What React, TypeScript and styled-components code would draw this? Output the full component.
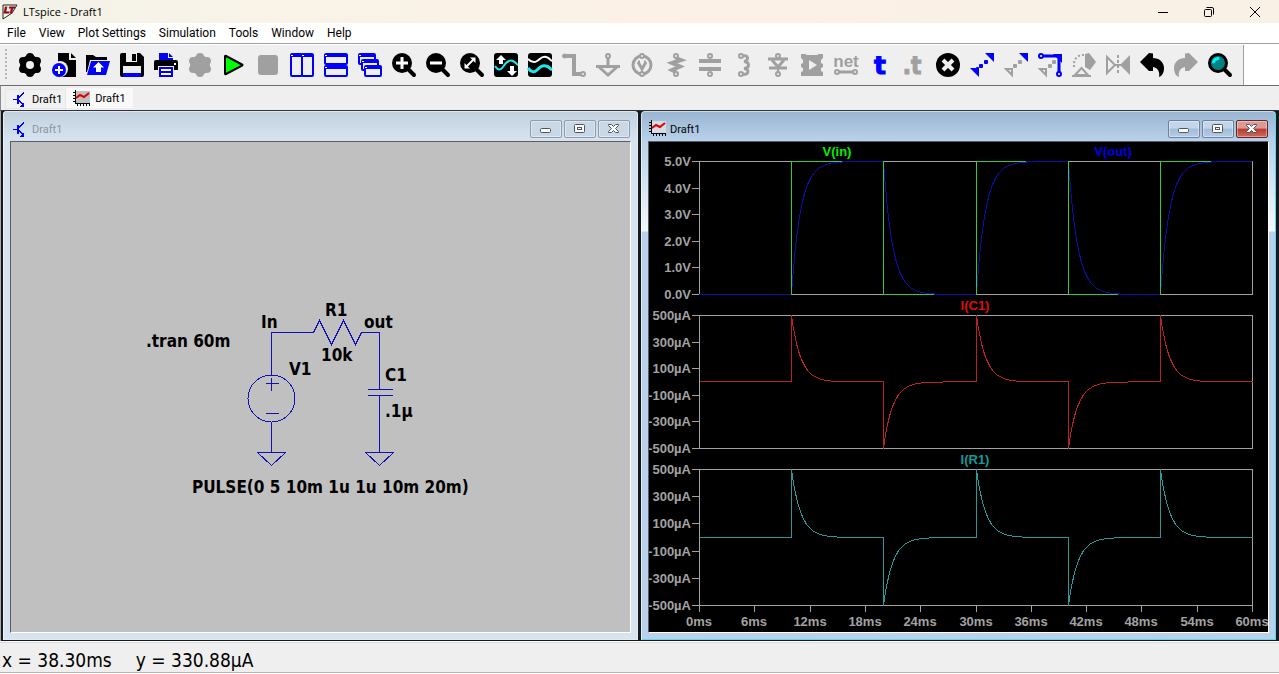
import React from "react";
import styled, { createGlobalStyle } from "styled-components";

const uiFont = `Roboto, "Open Sans", sans-serif`;
const GREY = "#a0a0a0";
const BLUE = "#0000ff";

const GlobalStyle = createGlobalStyle`
  * { box-sizing: border-box; }
  body { margin: 0; background: #efefef; font-family: ${uiFont}; font-size: 12px; color: #000; }
  button { font: inherit; color: inherit; padding: 0; margin: 0; border: 0; background: none; }
`;

const AppShell = styled.div`
  display: flex;
  flex-direction: column;
  min-height: 100vh;
`;

const TitleBar = styled.header`
  display: flex;
  align-items: center;
  height: 23px;
  padding: 0 1px 0 2px;
  background: linear-gradient(90deg, #f1f2e8 0%, #f8f3e8 15%, #fbf1e6 50%, #f9f0e6 100%);
`;

const AppTitle = styled.h1`
  flex: 1;
  margin: 0 0 0 5px;
  font-family: "Open Sans", sans-serif;
  font-size: 11px;
  font-weight: 400;
  line-height: 22px;
`;

const SystemButton = styled.button`
  display: grid;
  place-items: center;
  width: 46px;
  height: 22px;
`;

const MenuBar = styled.nav`
  display: flex;
  gap: 13px;
  height: 20px;
  padding-left: 7px;
  background: #fff;
`;

const MenuItem = styled.button`
  line-height: 20px;
  white-space: nowrap;
`;

const ToolRow = styled.div`
  display: flex;
  height: 42px;
  background: #fff;
  border-top: 1px solid #a0a0a0;
  padding-top: 1px;
  overflow: hidden;
`;

const ToolBar = styled.div`
  display: flex;
  align-items: center;
  padding: 0 6px 0 5px;
  background: #efefef;
  border-right: 1px solid #a0a0a0;
`;

const Grip = styled.span`
  width: 2px;
  height: 32px;
  margin-right: 6px;
  background: repeating-linear-gradient(180deg, #b8b8b8 0 2px, #efefef 2px 4px);
`;

const ToolButton = styled.button`
  display: grid;
  place-items: center;
  width: 34px;
  height: 40px;
`;

const ToolIcon = styled.svg`
  width: 24px;
  height: 24px;
  overflow: visible;
`;

const TabBar = styled.div`
  display: flex;
  align-items: flex-start;
  height: 26px;
  padding: 2px 0 0 4px;
  border-top: 1px solid #6c6c6c;
  border-bottom: 1px solid #303438;
  border-left: 1px solid #8c8c8c;
  background: #efefef;
`;

const Tab = styled.button<{ $active?: boolean }>`
  display: flex;
  align-items: center;
  gap: ${(p) => (p.$active ? 5 : 4)}px;
  height: 20px;
  margin-top: ${(p) => (p.$active ? 0 : 1)}px;
  padding: 0 ${(p) => (p.$active ? 6 : 3)}px 0 6px;
  font-size: 11px;
  background: ${(p) => (p.$active ? "#f9f9f9" : "#f1f1f1")};
  border: 1px solid ${(p) => (p.$active ? "#f9f9f9" : "#e6e6e6")};
`;

const Workspace = styled.main`
  flex: 1;
  display: grid;
  grid-template-columns: 1fr 1fr;
  gap: 3px;
  padding: 0 3px 1px 2px;
  border-left: 1px solid #ababab;
  background: #14191d;
`;

const ChildWindow = styled.section<{ $active?: boolean }>`
  display: flex;
  flex-direction: column;
  min-width: 0;
  padding: 0 7px 7px;
  border-radius: 4px 4px 0 0;
  background: ${(p) =>
    p.$active
      ? "linear-gradient(180deg, rgba(255,255,255,0) 0 30px, rgba(255,255,255,.85) 120px, rgba(255,255,255,0) 121px), linear-gradient(180deg, #9ab5d2 0, #b9d1ea 30px)"
      : "linear-gradient(180deg, #c2d0de 0, #d7e4f0 30px)"};
  box-shadow: inset 0 1px #ffffff80, inset 1px 0 #ffffff90, inset -1px -1px ${(p) => (p.$active ? "#5fd8ec" : "#dfeaf4")};
`;

const ChildTitle = styled.div<{ $active?: boolean }>`
  display: flex;
  align-items: center;
  height: 30px;
  padding: 5px 1px 0 ${(p) => (p.$active ? 1 : 2)}px;
  color: ${(p) => (p.$active ? "#000" : "#8e959d")};
`;

const ChildCaption = styled.h2`
  flex: 1;
  margin: 2px 0 0 4px;
  font-size: 11px;
  font-weight: 400;
`;

const CaptionButtons = styled.div`
  display: flex;
  gap: 2px;
`;

const CaptionButton = styled.button<{ $tone: "idle" | "active" | "close" }>`
  display: grid;
  place-items: center;
  width: 32px;
  height: 18px;
  border-radius: 2px;
  border: 1px solid ${(p) => (p.$tone === "idle" ? "#8c9db0" : p.$tone === "close" ? "#5c2a30" : "#6c829e")};
  box-shadow: inset 0 0 0 1px #ffffff60;
  background: ${(p) =>
    p.$tone === "idle"
      ? "#cad8e6"
      : p.$tone === "close"
        ? "linear-gradient(180deg, #dc9a92 0 45%, #b93a2c 50%, #cf6a5c 100%)"
        : "linear-gradient(180deg, #c2d5ea 0 45%, #a2bbd8 50%, #b4cce6 100%)"};
`;

const Client = styled.div<{ $dark?: boolean }>`
  flex: 1;
  display: flex;
  border: 1px solid;
  border-color: #5a5e64 #fff #fff #5a5e64;
  background: ${(p) => (p.$dark ? "#000" : "#c0c0c0")};
  overflow: hidden;
`;

const Canvas = styled.svg`
  display: block;
  flex: 1;
  min-width: 0;
  min-height: 300px;
`;

const SchematicText = styled.text`
  font: bold 17px "DejaVu Sans Condensed", "DejaVu Sans", sans-serif;
  fill: #000;
`;

const AxisText = styled.text<{ $color?: string }>`
  font: bold 13px "Liberation Sans", Arial, sans-serif;
  fill: ${(p) => p.$color ?? "#a2a2a2"};
`;

const StatusBar = styled.footer`
  display: flex;
  gap: 24px;
  height: 33px;
  padding: 1px 0 0 2px;
  border-top: 1px solid #fff;
  border-bottom: 1px solid #fff;
  box-shadow: inset 0 1px #dcdcdc, inset 0 -1px #b9b3b3;
  background: #efefef;
  font: 19px/34px "DejaVu Sans Condensed", "DejaVu Sans", sans-serif;
`;

/* ---------- toolbar drawings, all on a 24 x 24 grid ---------- */

const gearLobes = [30, 90, 150, 210, 270, 330].map((d) => {
  const a = (d * Math.PI) / 180;
  return <circle key={d} cx={12 + 8 * Math.cos(a)} cy={12 + 8 * Math.sin(a)} r="4" />;
});

const Magnifier = ({ children }: { children?: React.ReactNode }) => (
  <>
    <circle cx="10" cy="10" r="10" />
    <path d="M16 16L22 22" stroke="#000" strokeWidth="4" strokeLinecap="round" />
    {children}
  </>
);

const MiniWindow = ({ x, y, w, h }: { x: number; y: number; w: number; h: number }) => (
  <>
    <rect x={x + 1} y={y + 1} width={w - 2} height={h - 2} rx="1" fill="#efefef" stroke={BLUE} strokeWidth="2" />
    <rect x={x + 1} y={y + 1} width={w - 2} height="3" fill={BLUE} />
    <rect x={x + 1} y={y + 2} width="2" height="1" fill="#fff" />
  </>
);

const Terminal = ({ x, y }: { x: number; y: number }) => (
  <circle cx={x} cy={y} r="2" fill="#efefef" stroke={GREY} strokeWidth="2" />
);

const icons: [string, React.ReactNode][] = [
  ["Settings", <>{gearLobes}<circle cx="12" cy="12" r="10" /><circle cx="12" cy="12" r="4" fill="#efefef" /></>],
  ["New schematic", <>
    <path d="M6 0H17V7H24V24H6Z" /><path d="M19 0L24 5H19Z" />
    <circle cx="8" cy="16" r="8" fill="#efefef" /><circle cx="7" cy="17" r="7" fill={BLUE} />
    <path d="M7 13V21M3 17H11" stroke="#fff" strokeWidth="2" />
  </>],
  ["Open", <>
    <path d="M0 2H7L10 4H21V7H4L1 19H0Z" />
    <path d="M5 8H24L20 22H1Z" fill={BLUE} />
    <path d="M12.500 9L18 14.500H15V19H10V14.500H7Z" fill="#fff" />
  </>],
  ["Save", <>
    <path d="M2 0H20L24 4V22Q24 24 22 24H2Q0 24 0 22V2Q0 0 2 0Z" />
    <rect x="6" y="0" width="11" height="9" fill="#efefef" /><rect x="12" y="1" width="4" height="7" />
    <rect x="3" y="13" width="18" height="7" fill="#efefef" /><rect x="3" y="20" width="18" height="4" fill={BLUE} />
  </>],
  ["Print", <>
    <path d="M5 0H14V5H19V8H5Z" fill={BLUE} /><path d="M15 0L19 4H15Z" fill={BLUE} />
    <path d="M2 7H22Q24 7 24 9V17H0V9Q0 7 2 7Z" /><rect x="20" y="10" width="2" height="2" fill="#fff" />
    <rect x="4" y="13" width="16" height="11" fill="#efefef" /><rect x="5" y="14" width="14" height="10" fill={BLUE} />
    <path d="M7 17H17M7 21H17" stroke="#fff" strokeWidth="2" />
  </>],
  ["Control panel", <g fill={GREY}>{gearLobes}<circle cx="12" cy="12" r="10" /></g>],
  ["Run", <path d="M3 3.500Q3 2.500 4 3L20 11.500Q21 12 20 12.700L4 21Q3 21.500 3 20.500Z" fill="#00ff00" stroke="#000" strokeWidth="2" />],
  ["Stop", <rect x="2" y="2" width="20" height="20" rx="3" fill={GREY} />],
  ["Tile vertically", <><MiniWindow x={0} y={0} w={13} h={24} /><MiniWindow x={11} y={0} w={13} h={24} /></>],
  ["Tile horizontally", <><MiniWindow x={0} y={0} w={24} h={12} /><MiniWindow x={0} y={12} w={24} h={12} /></>],
  ["Cascade", <><MiniWindow x={0} y={0} w={18} h={12} /><MiniWindow x={3} y={6} w={18} h={12} /><MiniWindow x={6} y={12} w={18} h={12} /></>],
  ["Zoom in", <Magnifier><path d="M10 4V16M4 10H16" stroke="#fff" strokeWidth="3" /></Magnifier>],
  ["Zoom out", <Magnifier><path d="M4 10H16" stroke="#fff" strokeWidth="3" /></Magnifier>],
  ["Zoom to fit", <Magnifier><path d="M7 13L13 7" stroke="#fff" strokeWidth="2" /><path d="M10 4.500H15.500V10ZM4.500 10V15.500H10Z" fill="#fff" /></Magnifier>],
  ["Autorange", <>
    <rect width="24" height="24" rx="3" />
    <path d="M1 13C4 18 7 17 9 14S15 6 19 8S22 11 24 12" fill="none" stroke="#22e6ee" strokeWidth="2" />
    <path d="M7 2L12 7H9V11H5V7H2ZM18 23L13 18H16V13H20V18H23Z" fill="#fff" />
  </>],
  ["Pick traces", <>
    <rect width="24" height="24" rx="3" />
    <path d="M0 6C3 9 6 10 9 8S14 3 18 4S22 7 24 8" fill="none" stroke="#fff" strokeWidth="2" />
    <path d="M0 15C3 19 6 20 9 17S14 12 18 13S22 16 24 17" fill="none" stroke="#22e6ee" strokeWidth="3" />
  </>],
  ["Wire", <g stroke={GREY} fill="none"><path d="M3 3H12V21H20" strokeWidth="4" /><circle cx="2.500" cy="3" r="2" fill={GREY} /><Terminal x={21} y={21} /></g>],
  ["Ground", <g stroke={GREY} fill="none" strokeWidth="3"><path d="M12 5V13" /><Terminal x={12} y={3} /><path d="M0 13.500H24M3 14L12 22L21 14" /></g>],
  ["Voltage source", <g stroke={GREY} fill="none"><circle cx="12" cy="12" r="9" strokeWidth="3" /><path d="M8 9L12 16L16 9M8 9H10M14 9H16" strokeWidth="3" /><Terminal x={12} y={3} /><Terminal x={12} y={21} /></g>],
  ["Resistor", <g stroke={GREY} fill="none"><path d="M12 5L17 7L8 10L16 13.500L8 17L12 19" strokeWidth="4" /><Terminal x={12} y={3} /><Terminal x={12} y={21} /></g>],
  ["Capacitor", <g stroke={GREY} fill="none"><path d="M1 8H23M1 16H23" strokeWidth="4" /><Terminal x={12} y={3} /><Terminal x={12} y={21} /></g>],
  ["Inductor", <g stroke={GREY} fill="none"><path d="M10 3C17 1 17 8 12 8.500C18 9 18 15 12 15.500C18 16 17 23 10 21" strokeWidth="3" /><Terminal x={9} y={3} /><Terminal x={9} y={21} /></g>],
  ["Diode", <g stroke={GREY} fill="none"><path d="M2 6H22M3 15H21" strokeWidth="3" /><path d="M6 7L12 14L18 7" strokeWidth="3" /><path d="M12 15V19" strokeWidth="2" /><Terminal x={12} y={3} /><Terminal x={12} y={21} /></g>],
  ["Component", <><path d="M1 1H5L7 2H17L19 1H23V5L21 7V10L23 11V14L21 15V18L23 19V23H1V19L3 18V15L1 14V11L3 10V7L1 5Z" fill={GREY} /><path d="M9 7L17 12L9 17Z" fill="#efefef" /></>],
  ["Label net", <><text x="12" y="14" textAnchor="middle" fill={GREY} fontFamily="Liberation Sans" fontWeight="700" fontSize="17">net</text><path d="M2 19H22" stroke={GREY} strokeWidth="3" /><Terminal x={3} y={19} /><Terminal x={21} y={19} /></>],
  ["Text", <text x="12" y="21" textAnchor="middle" fill={BLUE} stroke={BLUE} fontFamily="DejaVu Sans" fontWeight="700" fontSize="25">t</text>],
  ["SPICE directive", <text x="10" y="21" textAnchor="middle" fill={GREY} stroke={GREY} fontFamily="DejaVu Sans Condensed" fontWeight="700" fontSize="24">.t</text>],
  ["Delete", <><circle cx="12" cy="12" r="12" /><path d="M7 7L17 17M17 7L7 17" stroke="#efefef" strokeWidth="4" /></>],
  ["Move", <g fill={BLUE}><path d="M15 0H24V9ZM0 15H9V24Z" /><rect x="14" y="7" width="4" height="4" rx="1" /><rect x="9" y="11" width="4" height="4" rx="1" /><rect x="6" y="14" width="3" height="4" rx="1" /></g>],
  ["Duplicate", <><path d="M15 0H24V9Z" fill={BLUE} /><path d="M2 16H8V22Z" fill="none" stroke={GREY} strokeWidth="2" /><g fill={GREY}><rect x="14" y="7" width="4" height="4" rx="1" /><rect x="9" y="11" width="4" height="4" rx="1" /></g></>],
  ["Drag", <><path d="M15 1H24V10Z" fill={BLUE} /><path d="M5 3H21V19" fill="none" stroke={BLUE} strokeWidth="3" /><circle cx="3" cy="3" r="2" fill="#fff" stroke={BLUE} strokeWidth="2" /><circle cx="21" cy="21" r="2" fill="#fff" stroke={BLUE} strokeWidth="2" /><path d="M2 16H8V22Z" fill="none" stroke={GREY} strokeWidth="2" /><g fill={GREY}><rect x="14" y="7" width="4" height="4" rx="1" /><rect x="10" y="11" width="4" height="4" rx="1" /></g></>],
  ["Rotate", <><path d="M2 14V11A9 9 0 0 1 12 2" fill="none" stroke={GREY} strokeWidth="2" strokeDasharray="2 2" /><path d="M13 1L17 0L24 9L18 17L13 14Z" fill={GREY} /><path d="M3 22L9.500 15L16 22Z" fill="#efefef" stroke={GREY} strokeWidth="2" /><path d="M0 23H19" stroke={GREY} strokeWidth="2" /></>],
  ["Mirror", <><path d="M1 4L9 12L1 20Z" fill="none" stroke={GREY} strokeWidth="2" /><path d="M24 2V22L14 12Z" fill={GREY} /><path d="M12 2V22" stroke={GREY} strokeWidth="2" strokeDasharray="3 2" /><path d="M8 12H16" stroke={GREY} strokeWidth="2" /></>],
  ["Undo", <path d="M0 9L9 0L13 0.500V5C19 5 24 9 24 15C24 20 22 23 19 24C20 19 18 15 13 14V18H9Z" />],
  ["Redo", <path d="M24 9L15 0L11 0.500V5C5 5 0 9 0 15C0 20 2 23 5 24C4 19 6 15 11 14V18H15Z" fill={GREY} />],
  ["Find", <><path d="M17 17L22 22" stroke="#000" strokeWidth="4" strokeLinecap="round" /><circle cx="10" cy="10" r="8.500" fill="#008284" stroke="#000" strokeWidth="3" /><path d="M5.500 9A5 5 0 0 1 10 5.500" fill="none" stroke="#00f4f4" strokeWidth="3" strokeLinecap="round" /></>],
];

const SchematicIcon = () => (
  <svg width="16" height="16" viewBox="0 0 16 16" fill="none" stroke={BLUE} shapeRendering="crispEdges" aria-hidden="true">
    <path d="M1 8.500H5" /><path d="M6 4V13" strokeWidth="2" /><path d="M7 6.500L12 1.500M7 9.500L12 14.500" />
    <path d="M12 11V16H8Z" fill={BLUE} stroke="none" />
  </svg>
);

const PlotIcon = ({ fill = "#c0c0c0" }: { fill?: string }) => (
  <svg width="17" height="17" viewBox="0 0 17 17" shapeRendering="crispEdges" aria-hidden="true">
    <rect x="3" y="1" width="14" height="12" fill={fill} />
    <path d="M2.500 0V14M2 13.500H17" stroke="#000" />
    <path d="M0 2.500H2M0 5.500H2M0 8.500H2M0 11.500H2M4.500 14V16M7.500 14V16M10.500 14V16M13.500 14V16M16.500 14V16" stroke="#000" />
    <path d="M3 8L7 5L11 7L16 3" fill="none" stroke="#e00000" strokeWidth="2" shapeRendering="auto" />
  </svg>
);

const AppIcon = () => (
  <svg width="16" height="18" viewBox="0 0 16 18" aria-hidden="true">
    <path d="M1 2L15 2L10 10L1 16Z" fill="#fbf5ee" stroke="#222" strokeWidth="1" />
    <text x="2" y="10" fill="#8c0c14" stroke="#8c0c14" fontFamily="Liberation Sans" fontSize="9" fontWeight="700" fontStyle="italic">LT</text>
  </svg>
);

const ChildButtons = ({ active }: { active?: boolean }) => {
  const tone = active ? "active" : "idle";
  const glyph = { fill: "#fff", stroke: "#4c5564" };
  return (
    <CaptionButtons>
      <CaptionButton $tone={tone} aria-label="Minimize">
        <svg width="12" height="12" viewBox="0 0 12 12"><rect x="0.500" y="5.500" width="10" height="4" rx="1" {...glyph} /></svg>
      </CaptionButton>
      <CaptionButton $tone={tone} aria-label="Maximize">
        <svg width="12" height="12" viewBox="0 0 12 12"><rect x="0.500" y="1.500" width="10" height="8" rx="1" {...glyph} /><rect x="3.500" y="4.500" width="4" height="2" {...glyph} /></svg>
      </CaptionButton>
      <CaptionButton $tone={active ? "close" : "idle"} aria-label="Close">
        <svg width="12" height="12" viewBox="0 0 12 12"><path d="M0.500 1.500H3.500L5.500 3.500L7.500 1.500H10.500V2.500L7.500 5.500L10.500 8.500V9.500H7.500L5.500 7.500L3.500 9.500H0.500V8.500L3.500 5.500L0.500 2.500Z" {...glyph} /></svg>
      </CaptionButton>
    </CaptionButtons>
  );
};

/* ---------- schematic ---------- */

const schematicLabels: [number, number, string][] = [
  [135, 205, ".tran 60m"],
  [250, 186, "In"],
  [314, 174, "R1"],
  [353, 186, "out"],
  [310, 219, "10k"],
  [278, 233, "V1"],
  [374, 239, "C1"],
  [374, 275, ".1µ"],
  [181, 351, "PULSE(0 5 10m 1u 1u 10m 20m)"],
];

const Schematic = () => (
  <Canvas viewBox="0 0 619 490" role="img" aria-label="RC circuit schematic">
    <g fill="none" stroke="#1010b4" shapeRendering="crispEdges" transform="translate(0.5 0.5)">
      <path d="M260 232V190H302L308 178L320 202L332 178L344 202L350 190H368V247M356 247H381M356 253H381M368 253V310" />
      <circle cx="260" cy="256" r="23.500" />
      <path d="M254 241H267M260 235V248M254 271H267M260 279V310" />
      <path d="M246 310H274L260 323ZM354 310H382L368 323Z" />
    </g>
    {schematicLabels.map(([x, y, t]) => (
      <SchematicText key={t} x={x} y={y}>{t}</SchematicText>
    ))}
  </Canvas>
);

/* ---------- waveforms ---------- */

const X0 = 50;
const X1 = 603;
const xAt = (ms: number) => Math.round(X0 + ((X1 - X0) * ms) / 60);

/* The source toggles every 10 ms; k is the index of the interval, dt the time since its edge. */
type Wave = (k: number, dt: number) => number;

const points = (wave: Wave, toY: (v: number) => number) => {
  const out: string[] = [];
  for (let k = 0; k < 6; k++) {
    const start = xAt(k * 10);
    const end = xAt(k * 10 + 10);
    for (let px = start; px <= end; px++) {
      const dt = ((px - start) * 60) / (X1 - X0);
      out.push(`${px + 0.5},${Math.round(toY(wave(k, dt))) + 0.5}`);
    }
  }
  return out.join(" ");
};

const vIn: Wave = (k) => (k % 2 ? 5 : 0);
const vOut: Wave = (k, dt) => (k === 0 ? 0 : k % 2 ? 5 - 5 * Math.exp(-dt) : 5 * Math.exp(-dt));
const current: Wave = (k, dt) => (k === 0 ? 0 : (k % 2 ? 500 : -500) * Math.exp(-dt));

const volts = ["5.0V", "4.0V", "3.0V", "2.0V", "1.0V", "0.0V"];
const amps = ["500µA", "300µA", "100µA", "-100µA", "-300µA", "-500µA"];
const times = [0, 6, 12, 18, 24, 30, 36, 42, 48, 54, 60];

const Pane = ({ top, bottom, ticks }: { top: number; bottom: number; ticks: string[] }) => (
  <>
    <rect x={X0 + 0.5} y={top + 0.5} width={X1 - X0} height={bottom - top} fill="none" stroke="#a2a2a2" />
    {ticks.map((t, i) => {
      const y = Math.round(top + ((bottom - top) * i) / (ticks.length - 1));
      return (
        <g key={t}>
          <path d={`M${X0 - 7} ${y + 0.5}H${X0}`} stroke="#a2a2a2" />
          <AxisText x={X0 - 8} y={y + 5} textAnchor="end">{t}</AxisText>
        </g>
      );
    })}
  </>
);

const Trace = ({ color, wave, toY }: { color: string; wave: Wave; toY: (v: number) => number }) => (
  <polyline points={points(wave, toY)} fill="none" stroke={color} shapeRendering="crispEdges" />
);

const voltY = (v: number) => 152 - (v / 5) * 133;

const Waveforms = () => (
  <Canvas viewBox="0 0 619 490" role="img" aria-label="Transient simulation waveforms">
    <Pane top={19} bottom={152} ticks={volts} />
    <Pane top={173} bottom={306} ticks={amps} />
    <Pane top={327} bottom={463} ticks={amps} />
    {times.map((t) => (
      <g key={t}>
        <path d={`M${xAt(t) + 0.5} 463V470`} stroke="#a2a2a2" />
        <AxisText x={xAt(t)} y={484} textAnchor="middle">{`${t}ms`}</AxisText>
      </g>
    ))}
    <Trace color="#0c0ca8" wave={vOut} toY={voltY} />
    <Trace color="#3cc83c" wave={vIn} toY={voltY} />
    {[0, 1, 2, 3, 4, 5].map((k) => {
      const y = (k % 2 ? 19 : 152) + 0.5;
      return <path key={k} d={`M${xAt(k === 0 ? 0 : k * 10 + 5.5)} ${y}H${xAt(k * 10 + 10)}`} stroke="#0c0ca8" />;
    })}
    <Trace color="#b82424" wave={current} toY={(a) => 239.4 - (a / 500) * 66.4} />
    <Trace color="#2f9797" wave={current} toY={(a) => 395 - (a / 500) * 68} />
    <AxisText $color="#00f000" x="188" y="14" textAnchor="middle">V(in)</AxisText>
    <AxisText $color="#0000e0" x="464" y="14" textAnchor="middle">V(out)</AxisText>
    <AxisText $color="#e00c0c" x="326" y="168" textAnchor="middle">I(C1)</AxisText>
    <AxisText $color="#109a9a" x="326" y="322" textAnchor="middle">I(R1)</AxisText>
  </Canvas>
);

export default function App() {
  return (
    <AppShell>
      <GlobalStyle />
      <TitleBar>
        <AppIcon />
        <AppTitle>LTspice - Draft1</AppTitle>
        <SystemButton aria-label="Minimize">
          <svg width="12" height="12" viewBox="0 0 12 12" stroke="#000"><path d="M1 6.500H11" /></svg>
        </SystemButton>
        <SystemButton aria-label="Restore">
          <svg width="12" height="12" viewBox="0 0 12 12" fill="none" stroke="#000"><rect x="1.500" y="3.500" width="7" height="7" rx="1" /><path d="M3.500 1.500H9Q10.500 1.500 10.500 3V8.500" /></svg>
        </SystemButton>
        <SystemButton aria-label="Close">
          <svg width="12" height="12" viewBox="0 0 12 12" stroke="#000"><path d="M1 1L11 11M11 1L1 11" /></svg>
        </SystemButton>
      </TitleBar>
      <MenuBar>
        {["File", "View", "Plot Settings", "Simulation", "Tools", "Window", "Help"].map((m) => (
          <MenuItem key={m}>{m}</MenuItem>
        ))}
      </MenuBar>
      <ToolRow>
        <ToolBar role="toolbar">
          <Grip />
          {icons.map(([label, drawing]) => (
            <ToolButton key={label} aria-label={label}>
              <ToolIcon viewBox="0 0 24 24">{drawing}</ToolIcon>
            </ToolButton>
          ))}
        </ToolBar>
      </ToolRow>
      <TabBar>
        <Tab><SchematicIcon />Draft1</Tab>
        <Tab $active><PlotIcon />Draft1</Tab>
      </TabBar>
      <Workspace>
        <ChildWindow>
          <ChildTitle><SchematicIcon /><ChildCaption>Draft1</ChildCaption><ChildButtons /></ChildTitle>
          <Client><Schematic /></Client>
        </ChildWindow>
        <ChildWindow $active>
          <ChildTitle $active><PlotIcon fill="#d4dce6" /><ChildCaption>Draft1</ChildCaption><ChildButtons active /></ChildTitle>
          <Client $dark><Waveforms /></Client>
        </ChildWindow>
      </Workspace>
      <StatusBar><span>x = 38.30ms</span><span>y = 330.88µA</span></StatusBar>
    </AppShell>
  );
}
